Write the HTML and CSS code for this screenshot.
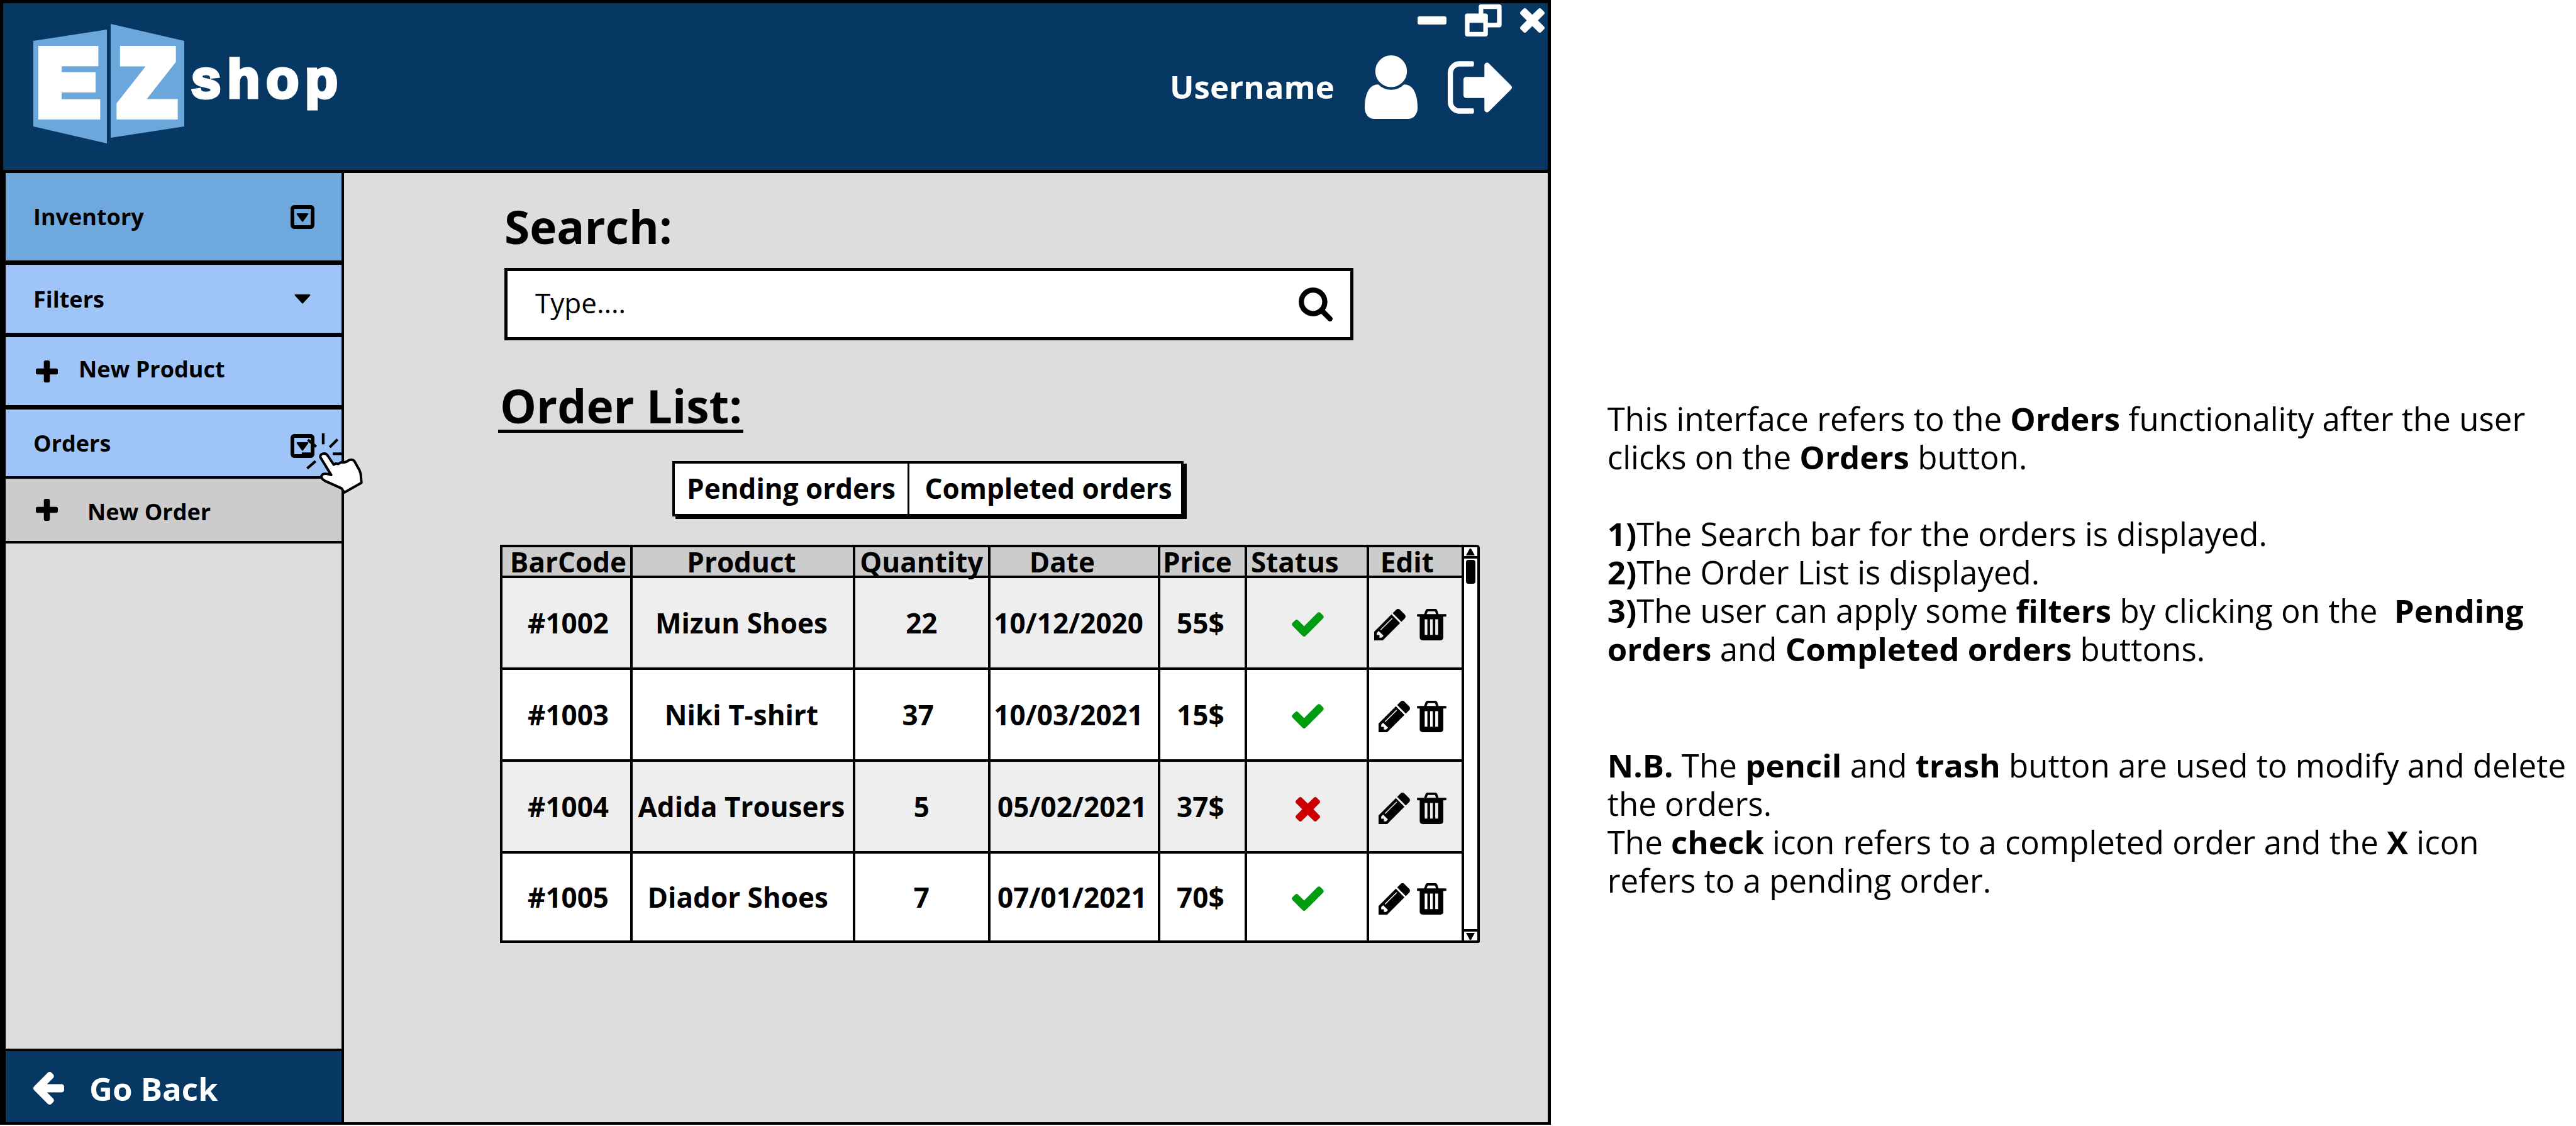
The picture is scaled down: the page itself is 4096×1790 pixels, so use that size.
FILE: index.html
```html
<!DOCTYPE html>
<html lang="en">
<head>
<meta charset="utf-8">
<title>EZ shop - Orders</title>
<link rel="stylesheet" href="styles.css">
</head>
<body>
<svg class="sprite" aria-hidden="true">
  <symbol id="check" viewBox="121 298 1550 1224"><path d="M1671 566q0 40-28 68l-724 724-136 136q-28 28-68 28t-68-28l-136-136-362-362q-28-28-28-68t28-68l136-136q28-28 68-28t68 28l294 295 656-657q28-28 68-28t68 28l136 136q28 28 28 68z"/></symbol>
  <symbol id="times" viewBox="302 366 1188 1188"><path d="M1490 1322q0 40-28 68l-136 136q-28 28-68 28t-68-28l-294-294-294 294q-28 28-68 28t-68-28l-136-136q-28-28-28-68t28-68l294-294-294-294q-28-28-28-68t28-68l136-136q28-28 68-28t68 28l294 294 294-294q28-28 68-28t68 28l136 136q28 28 28 68t-28 68l-294 294 294 294q28 28 28 68z"/></symbol>
  <symbol id="pencil" viewBox="128 149 1515 1515"><path d="M491 1536l91-91-235-235-91 91v107h128v128h107zm523-928q0-22-22-22-10 0-17 7l-542 542q-7 7-7 17 0 22 22 22 10 0 17-7l542-542q7-7 7-17zm-54-192l416 416-832 832h-416v-416zm683 96q0 53-37 90l-166 166-416-416 166-165q36-38 90-38 53 0 91 38l235 234q37 39 37 91z"/></symbol>
  <symbol id="trash" viewBox="0 0 153 164"><path fill-rule="evenodd" d="M3 27H37L44 8Q47 0 55 0H95Q103 0 106 8L112 27H150Q153 27 153 30V37Q153 40 150 40H137V148Q137 164 121 164H30Q14 164 14 148V40H3Q0 40 0 37V30Q0 27 3 27ZM50 27H99L95 15Q94 12 91 12H59Q56 12 55 15ZM40 54V135H54V54ZM68 54V135H82V54ZM95 54V135H110V54Z"/></symbol>
  <symbol id="search" viewBox="64 128 1664 1664"><path d="M1216 832q0-185-131.500-316.500t-316.500-131.500-316.500 131.500-131.500 316.500 131.500 316.500 316.500 131.500 316.500-131.500 131.500-316.500zm512 832q0 52-38 90t-90 38q-54 0-90-38l-343-342q-179 124-399 124-143 0-273.500-55.500t-225-150-150-225-55.500-273.500 55.500-273.500 150-225 225-150 273.500-55.500 273.500 55.500 225 150 150 225 55.500 273.500q0 220-124 399l343 343q37 37 37 90z"/></symbol>
  <symbol id="plus" viewBox="192 128 1408 1408"><path d="M1600 736v192q0 40-28 68t-68 28h-416v416q0 40-28 68t-68 28h-192q-40 0-68-28t-28-68v-416h-416q-40 0-68-28t-28-68v-192q0-40 28-68t68-28h416v-416q0-40 28-68t68-28h192q40 0 68 28t28 68v416h416q40 0 68 28t28 68z"/></symbol>
  <symbol id="arrow" viewBox="64 117 1472 1558"><path d="M1536 832v128q0 53-32.500 90.500t-84.500 37.500h-704l293 294q38 36 38 90t-38 90l-75 76q-37 37-90 37-52 0-91-37l-651-652q-37-37-37-90 0-52 37-91l651-650q38-38 91-38 52 0 90 38l75 74q38 38 38 91t-38 91l-293 293h704q52 0 84.500 37.500t32.500 90.500z"/></symbol>
  <symbol id="user" viewBox="256 128 1280 1536"><path d="M1536 1399q0 109-62.500 187t-150.500 78h-854q-88 0-150.500-78t-62.500-187q0-85 8.500-160.500t31.500-152 58.500-131 94-89 134.500-34.500q131 128 313 128t313-128q76 0 134.500 34.500t94 89 58.500 131 31.500 152 8.500 160.500zm-256-887q0 159-112.500 271.500t-271.500 112.500-271.500-112.500-112.500-271.500 112.500-271.500 271.500-112.500 271.500 112.500 112.500 271.500z"/></symbol>
  <symbol id="signout" viewBox="64 256 1568 1280"><path d="M704 1440q0 4 1 20t.5 26.500-3 23.500-10 19.500-20.500 6.500h-320q-119 0-203.500-84.500t-84.500-203.500v-704q0-119 84.500-203.500t203.500-84.500h320q13 0 22.500 9.500t9.500 22.500q0 4 1 20t.5 26.500-3 23.500-10 19.500-20.500 6.500h-320q-66 0-113 47t-47 113v704q0 66 47 113t113 47h312l11.500 1 11.500 3 8 5.500 7 9 2 13.500zm928-544q0 26-19 45l-544 544q-19 19-45 19t-45-19-19-45v-288h-448q-26 0-45-19t-19-45v-384q0-26 19-45t45-19h448v-288q0-26 19-45t45-19 45 19l544 544q19 19 19 45z"/></symbol>
  <symbol id="restore" viewBox="0 0 64 56"><path fill-rule="evenodd" d="M28 0H60Q64 0 64 4V36Q64 40 60 40H40V52Q40 56 36 56H4Q0 56 0 52V20Q0 16 4 16H24V4Q24 0 28 0ZM32 8V16H36Q40 16 40 20V32H56V8ZM8 32V48H32V32Z"/></symbol>
  <symbol id="minus" viewBox="0 0 46 13"><rect width="46" height="13" rx="3"/></symbol>
  <symbol id="boxcaret" viewBox="0 0 38 38"><rect x="3" y="3" width="32" height="32" rx="3" fill="none" stroke="#000" stroke-width="6"/><path d="M10 13H28Q29 14 28 15L20 26Q19 27 18 26L10 15Q9 14 10 13Z"/></symbol>
  <symbol id="caret" viewBox="0 0 26 15"><path d="M1 0H25Q26 1 25 2L14 14Q13 15 12 14L1 2Q0 1 1 0Z"/></symbol>
</svg>

<div class="page">
  <div class="app">
    <header class="header">
      <svg class="logo" viewBox="0 0 487 190" role="img" aria-label="EZ shop">
        <path class="logo-panel" d="M0 27L117 9V190L0 163ZM123 0L240 27V163L123 181Z"/>
        <text class="logo-big" x="6" y="144">E</text>
        <text class="logo-big" x="136" y="144">Z</text>
        <text class="logo-small" x="251" y="117">shop</text>
      </svg>
      <div class="header-side">
        <div class="window-controls">
          <button type="button" aria-label="Minimize"><svg class="i-minus"><use href="#minus"/></svg></button>
          <button type="button" aria-label="Restore"><svg class="i-restore"><use href="#restore"/></svg></button>
          <button type="button" aria-label="Close"><svg class="i-close"><use href="#times"/></svg></button>
        </div>
        <div class="account">
          <span>Username</span>
          <button type="button" aria-label="Profile"><svg class="i-user"><use href="#user"/></svg></button>
          <button type="button" aria-label="Sign out"><svg class="i-signout"><use href="#signout"/></svg></button>
        </div>
      </div>
    </header>

    <div class="body">
      <nav class="sidebar">
        <button type="button" class="item item-inventory"><span>Inventory</span><svg class="i-box"><use href="#boxcaret"/></svg></button>
        <button type="button" class="item item-light"><span>Filters</span><svg class="i-caret"><use href="#caret"/></svg></button>
        <button type="button" class="item item-light item-plus"><svg class="i-plus"><use href="#plus"/></svg><span>New Product</span></button>
        <div class="orders">
          <button type="button" class="item item-light item-orders"><span>Orders</span><svg class="i-box"><use href="#boxcaret"/></svg></button>
          <svg class="cursor" viewBox="0 0 480 450" aria-hidden="true">
            <path class="rays" d="M220 78V135M254 151L295 110M270 185H322M180 224L136 262M140 112L183 148M108 185H172"/>
            <path class="hand" d="M205 203C203 190 215 182 228 184C238 186 241 190 245 197L275 242L286 236L300 238L312 230L330 230L345 225C355 216 370 212 382 222L410 272L416 290L420 337L330 388L316 366L232 328C215 320 208 310 212 298C218 288 235 287 262 296Z"/>
          </svg>
        </div>
        <button type="button" class="item item-grey"><svg class="i-plus"><use href="#plus"/></svg><span>New Order</span></button>
        <button type="button" class="item item-back"><svg class="i-arrow"><use href="#arrow"/></svg><span>Go Back</span></button>
      </nav>

      <main class="main">
        <label class="search-label" for="search-box">Search:</label>
        <div class="search">
          <input id="search-box" type="text" placeholder="Type....">
          <button type="button" aria-label="Search"><svg class="i-search"><use href="#search"/></svg></button>
        </div>

        <h1 class="list-title">Order List:</h1>

        <div class="tabs">
          <button type="button" class="tab-pending">Pending orders</button>
          <button type="button" class="tab-completed">Completed orders</button>
        </div>

        <div class="list">
          <table class="orders-table">
            <colgroup><col class="c-code"><col class="c-product"><col class="c-qty"><col class="c-date"><col class="c-price"><col class="c-status"><col class="c-edit"></colgroup>
            <thead>
              <tr><th class="code">BarCode</th><th class="product">Product</th><th>Quantity</th><th class="h-date">Date</th><th class="h-price">Price</th><th class="h-status">Status</th><th class="h-edit">Edit</th></tr>
            </thead>
            <tbody>
              <tr><td class="code">#1002</td><td class="product">Mizun Shoes</td><td>22</td><td class="date">10/12/2020&nbsp;</td><td class="price">55$</td><td class="status"><svg class="i-check" role="img" aria-label="Completed"><use href="#check"/></svg></td>
                <td><div class="actions actions-wide"><button type="button" aria-label="Edit"><svg class="i-pencil"><use href="#pencil"/></svg></button><button type="button" aria-label="Delete"><svg class="i-trash"><use href="#trash"/></svg></button></div></td></tr>
              <tr><td class="code">#1003</td><td class="product">Niki T-shirt</td><td>37&nbsp;</td><td class="date">10/03/2021&nbsp;</td><td class="price">15$</td><td class="status"><svg class="i-check" role="img" aria-label="Completed"><use href="#check"/></svg></td>
                <td><div class="actions"><button type="button" aria-label="Edit"><svg class="i-pencil"><use href="#pencil"/></svg></button><button type="button" aria-label="Delete"><svg class="i-trash"><use href="#trash"/></svg></button></div></td></tr>
              <tr><td class="code">#1004</td><td class="product">Adida Trousers</td><td>5</td><td class="date">05/02/2021</td><td class="price">37$</td><td class="status"><svg class="i-cross" role="img" aria-label="Pending"><use href="#times"/></svg></td>
                <td><div class="actions"><button type="button" aria-label="Edit"><svg class="i-pencil"><use href="#pencil"/></svg></button><button type="button" aria-label="Delete"><svg class="i-trash"><use href="#trash"/></svg></button></div></td></tr>
              <tr><td class="code">#1005</td><td class="product">Diador Shoes&nbsp;</td><td>7</td><td class="date">07/01/2021</td><td class="price">70$</td><td class="status"><svg class="i-check" role="img" aria-label="Completed"><use href="#check"/></svg></td>
                <td><div class="actions"><button type="button" aria-label="Edit"><svg class="i-pencil"><use href="#pencil"/></svg></button><button type="button" aria-label="Delete"><svg class="i-trash"><use href="#trash"/></svg></button></div></td></tr>
            </tbody>
          </table>
          <div class="scrollbar" aria-hidden="true">
            <div class="scroll-up"><svg viewBox="0 0 14 11"><path d="M6 0H8L14 11H0Z"/></svg></div>
            <div class="scroll-track"><div class="scroll-thumb"></div></div>
            <div class="scroll-down"><svg viewBox="0 0 14 11"><path d="M0 0H14L8 11H6Z"/></svg></div>
          </div>
        </div>
      </main>
    </div>
  </div>

  <aside class="notes">
    <p>This interface refers to the <b>Orders</b> functionality after the user clicks on the <b>Orders</b> button.</p>
    <p><b>1)</b>The Search bar for the orders is displayed.<br><b>2)</b>The Order List is displayed.<br><b>3)</b>The user can apply some <b>filters</b> by clicking on the&nbsp; <b>Pending orders</b> and <b>Completed orders</b> buttons.</p>
    <p class="nb"><b>N.B.</b> The <b>pencil</b> and <b>trash</b> button are used to modify and delete the orders.<br>The <b>check</b> icon refers to a completed order and the <b>X</b> icon refers to a pending order.</p>
  </aside>
</div>
</body>
</html>
```
FILE: styles.css
```css
* { box-sizing: border-box; }

body {
  margin: 0;
  background: #fff;
  color: #000;
  font-family: "Open Sans", "Noto Sans", sans-serif;
}

button {
  margin: 0;
  padding: 0;
  border: 0;
  background: none;
  color: inherit;
  font: inherit;
  cursor: pointer;
}

svg { display: block; fill: currentColor; }
.sprite { position: absolute; width: 0; height: 0; }

.page { display: flex; min-height: 100vh; }

/* application window */
.app {
  flex: 0 0 60.2%;
  display: flex;
  flex-direction: column;
  margin-bottom: 2px;
  border: 5px solid #000;
  border-bottom-width: 4px;
  background: #ddd;
}

.header {
  display: flex;
  justify-content: space-between;
  align-items: flex-start;
  height: 270px;
  border-bottom: 5px solid #000;
  background: #073763;
  color: #fff;
}

.logo { width: 487px; height: 190px; margin: 33px 0 0 48px; overflow: visible; }
.logo-panel { fill: #6ca7db; }
.logo-big,
.logo-small {
  fill: #fff;
  stroke: #fff;
  font-family: "Liberation Sans", Arial, sans-serif;
  font-weight: 700;
}
.logo-big { font-size: 147px; stroke-width: 16px; }
.logo-small { font-size: 85px; stroke-width: 5px; letter-spacing: 10px; }

.window-controls {
  display: flex;
  justify-content: flex-end;
  align-items: center;
  gap: 29px;
  padding: 2px 5px 0 0;
}
.account {
  display: flex;
  justify-content: flex-end;
  align-items: center;
  gap: 48px;
  margin-top: 30px;
  padding-right: 57px;
  font-size: 51px;
  font-weight: 700;
}
.account span { padding-bottom: 4px; }
.i-minus { width: 46px; height: 13px; }
.i-restore { width: 59px; height: 51px; }
.i-close { width: 39px; height: 39px; }
.i-user { width: 84px; height: 101px; }
.i-signout { width: 102px; height: 84px; }

.body { flex: 1; display: flex; }

/* sidebar */
.sidebar {
  flex: 0 0 542px;
  display: flex;
  flex-direction: column;
  border: solid #000;
  border-width: 0 4px;
}
.item {
  display: flex;
  justify-content: space-between;
  align-items: center;
  width: 100%;
  height: 115px;
  padding: 0 43px 0 44px;
  border-bottom: 7px solid #000;
  font-size: 36px;
  font-weight: 700;
  text-align: left;
}
.item-inventory { height: 146px; background: #6fa8dc; }
.item-light { background: #9fc5f8; }
.item-plus { justify-content: flex-start; gap: 33px; padding: 0 48px; }
.item-plus span { padding-bottom: 8px; }
.orders { position: relative; }
.item-orders { height: 110px; border-bottom-width: 4px; }
.item-orders .i-box { margin-top: 10px; }
.item-grey {
  justify-content: flex-start;
  gap: 47px;
  height: 103px;
  padding: 0 48px;
  border-bottom-width: 4px;
  background: #ccc;
}
.item-grey span { padding-top: 6px; }
.item-back {
  justify-content: flex-start;
  gap: 40px;
  height: 117px;
  margin-top: auto;
  padding-top: 4px;
  border-top: 4px solid #000;
  border-bottom: 0;
  background: #073763;
  color: #fff;
  font-size: 51px;
}
.i-box { width: 38px; height: 38px; }
.i-caret { width: 26px; height: 15px; margin-right: 6px; }
.i-plus { width: 35px; height: 35px; }
.i-arrow { width: 49px; height: 52px; }

/* click pointer that floats over the Orders item */
.cursor {
  position: absolute;
  top: 14px;
  right: -50px;
  z-index: 1;
  width: 146px;
  height: 137px;
  stroke: #000;
  pointer-events: none;
}
.rays { fill: none; stroke-width: 14; }
.hand { fill: #fff; stroke-width: 13; stroke-linejoin: round; }

/* order list */
.main { flex: 1; min-width: 0; padding: 45px 108px 0 245px; }

.search-label {
  display: block;
  padding-left: 10px;
  font-size: 73px;
  font-weight: 700;
  line-height: 80px;
}
.search {
  display: flex;
  align-items: center;
  width: 86.5%;
  height: 115px;
  margin: 26px 0 66px 10px;
  padding: 0 28px 0 44px;
  border: 5px solid #000;
  background: #fff;
}
.search input {
  flex: 1;
  min-width: 0;
  padding: 0 0 6px;
  border: 0;
  outline: 0;
  background: none;
  font: 400 44px/60px "Open Sans", "Noto Sans", sans-serif;
}
.search input::placeholder { color: #000; opacity: 1; }
.i-search { width: 54px; height: 54px; }

.list-title {
  width: fit-content;
  margin: 0;
  padding: 0 2px 0 3px;
  border-bottom: 5px solid #000;
  font-size: 73px;
  font-weight: 700;
  line-height: 76px;
}

.tabs {
  display: flex;
  width: fit-content;
  height: 88px;
  margin: 45px 0 45px 277px;
  border: 4px solid #000;
  background: #fff;
  box-shadow: 5px 4px 0 #000;
  font-size: 44px;
  font-weight: 700;
}
.tab-pending { width: 373px; padding-bottom: 2px; border-right: 3px solid #000; }
.tab-completed { width: 432px; padding: 0 0 2px 10px; }

.list { display: flex; margin-left: 3px; }
.orders-table {
  flex: 1;
  border-collapse: collapse;
  table-layout: fixed;
  background: #fff;
  font-size: 44px;
  font-weight: 700;
  line-height: 44px;
  text-align: center;
}
.c-code { width: 13.54%; }
.c-product { width: 23.15%; }
.c-qty { width: 14.06%; }
.c-date { width: 17.66%; }
.c-price { width: 9.03%; }
.c-status { width: 12.69%; }
.c-edit { width: 9.87%; }

.orders-table th,
.orders-table td { height: 146px; padding: 0; border: 4px solid #000; white-space: nowrap; }
.orders-table th { height: 49px; background: #ccc; }
.orders-table tbody tr:nth-child(odd) { background: #eee; }
.orders-table tbody tr:last-child td { height: 142px; }
.orders-table .code { padding-left: 6px; }
.orders-table .product { padding-right: 4px; }
.orders-table .h-date { padding-right: 38px; }
.orders-table .h-price { padding-right: 16px; }
.orders-table .h-status { padding-right: 38px; }
.orders-table .h-edit { padding-right: 26px; }
.orders-table .date,
.orders-table .price { padding-right: 6px; }
.orders-table .status { padding-left: 4px; }

.i-check { width: 51px; height: 40px; margin: 4px auto 0; color: #009e0f; }
.i-cross { width: 39px; height: 39px; margin: 8px auto 0; color: #c00; }
.actions {
  display: flex;
  justify-content: flex-end;
  gap: 11px;
  padding: 6px 24px 0 0;
}
.actions-wide { gap: 18px; }
.i-pencil { width: 50px; height: 50px; }
.i-trash { width: 47px; height: 50px; }

.scrollbar {
  flex: 0 0 25px;
  display: flex;
  flex-direction: column;
  border: 4px solid #000;
  border-left: 0;
  border-radius: 0 5px 3px 0;
  background: #fff;
}
.scrollbar svg { width: 14px; height: 11px; }
.scroll-up,
.scroll-down { display: flex; justify-content: center; align-items: center; height: 18px; }
.scroll-up { border-bottom: 4px solid #000; }
.scroll-down { border-top: 4px solid #000; }
.scroll-track { flex: 1; padding: 2px 3px; }
.scroll-thumb { height: 38px; border-radius: 4px; background: #000; }

/* explanatory text beside the window */
.notes {
  flex: 1;
  min-width: 0;
  padding: 635px 6px 0 90px;
  font-size: 51px;
  line-height: 61px;
}
.notes p { margin: 0 0 61px; }
.notes .nb { margin-top: 124px; }
```
